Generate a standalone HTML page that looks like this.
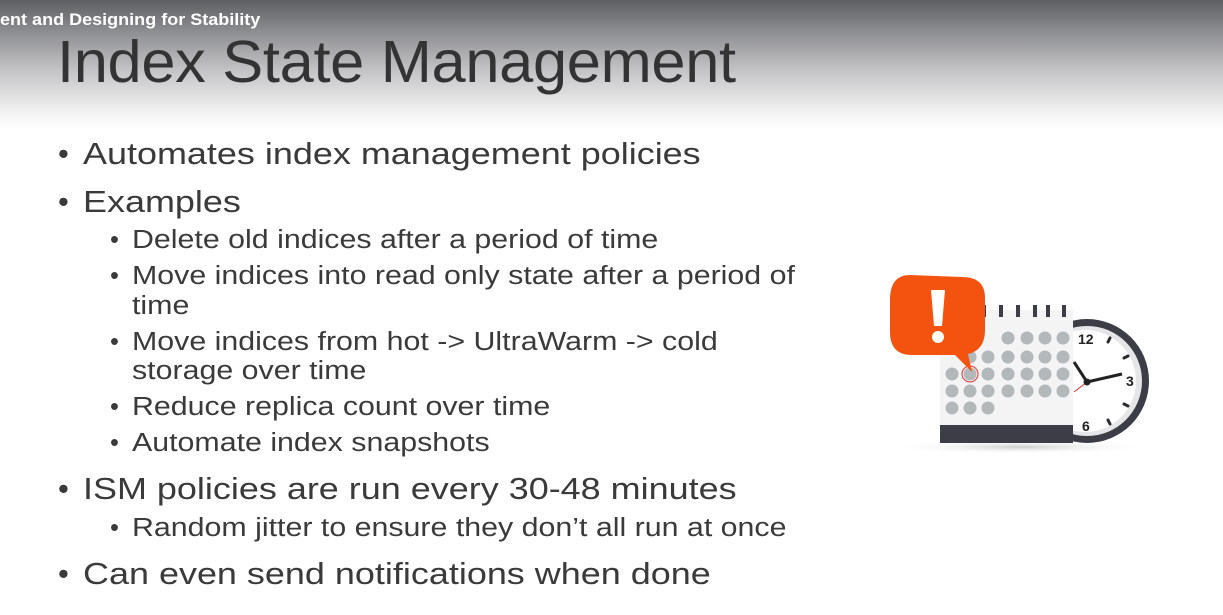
<!DOCTYPE html>
<html><head><style>
html,body{margin:0;padding:0}
body{width:1223px;height:615px;position:relative;overflow:hidden;background:#fff;font-family:"Liberation Sans",Arial,sans-serif;color:#3a3a3a}
.top{position:absolute;left:0;top:0;width:1223px;height:130px;background:linear-gradient(#5e5f63 0%,#8e8f92 25%,#c5c5c7 55%,#f0f0f0 85%,#fff 100%)}
.hdr{position:absolute;left:-16px;top:10px;font-size:17px;font-weight:bold;color:#fff;white-space:nowrap;transform:scaleX(1.06);transform-origin:left}
.title{position:absolute;left:57px;top:28px;font-size:59px;color:#333;white-space:nowrap;letter-spacing:-0.3px;transform:scaleX(1.04);transform-origin:left}
.l1,.l2{position:absolute;white-space:nowrap}
.l1{left:58px;font-size:31px}
.l1 span{position:absolute;left:25px;transform:scaleX(1.16);transform-origin:left}
.l2{left:110px;font-size:25.5px}
.l2 span{position:absolute;left:22px;transform:scaleX(1.19);transform-origin:left}
</style></head><body>
<div class="top"></div>
<div class="hdr">ment and Designing for Stability</div>
<div class="title">Index State Management</div>

<div class="l1" style="top:136px">•<span>Automates index management policies</span></div>
<div class="l1" style="top:184px">•<span>Examples</span></div>
<div class="l2" style="top:226px">•<span>Delete old indices after a period of time</span></div>
<div class="l2" style="top:262px">•<span>Move indices into read only state after a period of</span></div>
<div class="l2" style="top:292px"><span>time</span></div>
<div class="l2" style="top:328px">•<span>Move indices from hot -&gt; UltraWarm -&gt; cold</span></div>
<div class="l2" style="top:357px"><span>storage over time</span></div>
<div class="l2" style="top:393px">•<span>Reduce replica count over time</span></div>
<div class="l2" style="top:429px">•<span>Automate index snapshots</span></div>
<div class="l1" style="top:471px">•<span>ISM policies are run every 30-48 minutes</span></div>
<div class="l2" style="top:514px">•<span>Random jitter to ensure they don’t all run at once</span></div>
<div class="l1" style="top:556px">•<span>Can even send notifications when done</span></div>

<svg style="position:absolute;left:0;top:0" width="1223" height="615">
<defs><radialGradient id="sh" cx="0.5" cy="0.5" r="0.5"><stop offset="0" stop-color="#ccc"/><stop offset="1" stop-color="#fff" stop-opacity="0"/></radialGradient></defs>
<ellipse cx="1020" cy="447" rx="130" ry="7" fill="url(#sh)"/>
<circle cx="1087" cy="381" r="62" fill="#3c3d47"/>
<circle cx="1087" cy="381" r="55" fill="#e6e6e8"/>
<circle cx="1085" cy="381" r="51" fill="#fff"/>
<g stroke="#2a2a33" stroke-width="3" stroke-linecap="round">
<line x1="1108" y1="342" x2="1110" y2="338"/><line x1="1124" y1="358" x2="1128" y2="356"/>
<line x1="1124" y1="404" x2="1128" y2="406"/><line x1="1108" y1="420" x2="1110" y2="424"/>
</g>
<text x="1078" y="344" font-size="14" font-weight="bold" fill="#222" font-family="Liberation Sans">12</text>
<text x="1126" y="386" font-size="14" font-weight="bold" fill="#222" font-family="Liberation Sans">3</text>
<text x="1082" y="431" font-size="14" font-weight="bold" fill="#222" font-family="Liberation Sans">6</text>
<line x1="1087" y1="382" x2="1122" y2="374" stroke="#222" stroke-width="3"/>
<line x1="1087" y1="382" x2="1074" y2="362" stroke="#222" stroke-width="3"/>
<line x1="1087" y1="382" x2="1074" y2="392" stroke="#e03030" stroke-width="1"/>
<circle cx="1087" cy="382" r="3.5" fill="#222"/>
<rect x="940" y="310" width="133" height="125" fill="#f4f4f4"/>
<rect x="940" y="425" width="133" height="18" fill="#3c3d47"/>
<g fill="#3c3d47">
<rect x="982" y="305" width="4" height="12"/><rect x="999" y="305" width="4" height="12"/><rect x="1016" y="305" width="4" height="12"/><rect x="1033" y="305" width="4" height="12"/><rect x="1046" y="305" width="4" height="12"/><rect x="1062" y="305" width="4" height="12"/>
</g>
<g fill="#b3b8bb">
<circle cx="1008" cy="338" r="6.5"/><circle cx="1027" cy="338" r="6.5"/><circle cx="1045" cy="338" r="6.5"/><circle cx="1063" cy="338" r="6.5"/>
<circle cx="970" cy="357" r="6.5"/><circle cx="988" cy="357" r="6.5"/><circle cx="1008" cy="357" r="6.5"/><circle cx="1027" cy="357" r="6.5"/><circle cx="1045" cy="357" r="6.5"/><circle cx="1063" cy="357" r="6.5"/>
<circle cx="952" cy="374" r="6.5"/><circle cx="970" cy="374" r="6.5"/><circle cx="988" cy="374" r="6.5"/><circle cx="1008" cy="374" r="6.5"/><circle cx="1027" cy="374" r="6.5"/><circle cx="1045" cy="374" r="6.5"/><circle cx="1063" cy="374" r="6.5"/>
<circle cx="952" cy="391" r="6.5"/><circle cx="970" cy="391" r="6.5"/><circle cx="988" cy="391" r="6.5"/><circle cx="1008" cy="391" r="6.5"/><circle cx="1027" cy="391" r="6.5"/><circle cx="1045" cy="391" r="6.5"/><circle cx="1063" cy="391" r="6.5"/>
<circle cx="952" cy="408" r="6.5"/><circle cx="970" cy="408" r="6.5"/><circle cx="988" cy="408" r="6.5"/>
</g>
<circle cx="970" cy="374" r="8" fill="none" stroke="#e03030" stroke-width="1"/>
<path d="M910 275 Q890 275 890 300 L890 332 Q890 355 912 355 L955 355 L972 372 L968 354 Q985 350 985 330 L985 298 Q985 277 962 277 Z" fill="#f4520f"/>
<path d="M931 290 L945 290 L942 326 L934 326 Z" fill="#fff"/>
<circle cx="938" cy="337" r="6" fill="#fff"/>
</svg>
</body></html>
